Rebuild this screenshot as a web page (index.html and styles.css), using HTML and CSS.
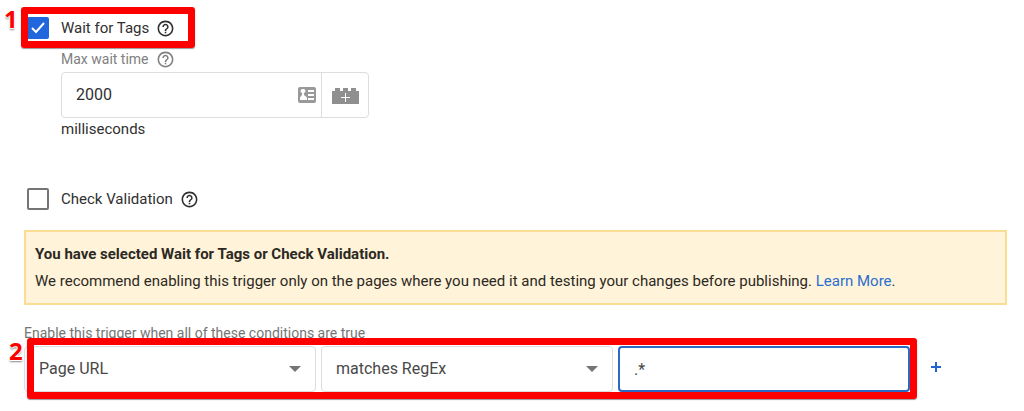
FILE: index.html
```html
<!DOCTYPE html>
<html lang="en">
<head>
<meta charset="utf-8">
<meta name="viewport" content="width=device-width, initial-scale=1">
<title>Trigger configuration</title>
<link rel="stylesheet" href="styles.css">
</head>
<body>
<svg class="symbols" aria-hidden="true">
  <symbol id="help" viewBox="0 0 24 24"><path fill="currentColor" d="M11 18h2v-2h-2v2zm1-16C6.480 2 2 6.480 2 12s4.480 10 10 10 10-4.480 10-10S17.520 2 12 2zm0 18c-4.410 0-8-3.590-8-8s3.590-8 8-8 8 3.590 8 8-3.590 8-8 8zm0-14c-2.210 0-4 1.790-4 4h2c0-1.100.9-2 2-2s2 .9 2 2c0 2-3 1.750-3 5h2c0-2.250 3-2.500 3-5 0-2.210-1.790-4-4-4z"/></symbol>
  <symbol id="arrow" viewBox="0 0 12 6"><path fill="#757575" d="M0 0h12L6 6z"/></symbol>
</svg>
<main class="page">
  <div class="option marked">
    <input class="checkbox" type="checkbox" id="wait" checked>
    <label for="wait">Wait for Tags</label>
    <svg class="help" role="img" aria-label="Help"><use href="#help"/></svg>
    <div class="highlight highlight-option"><span class="step step-option">1</span></div>
  </div>

  <div class="wait-field">
    <div class="field-label">
      <label for="max">Max wait time</label>
      <svg class="help" role="img" aria-label="Help"><use href="#help"/></svg>
    </div>
    <div class="input-group">
      <input class="wait-input" type="text" id="max" value="2000">
      <svg class="card-icon" viewBox="0 0 18 16" aria-hidden="true">
        <rect width="18" height="16" rx="2" fill="#999"/>
        <path fill="#fff" d="M10 3h6v2h-6zM10 7h6v2h-6zM10 11h6v2h-6zM5 2a2 2 0 0 1 1 4v2c1 1 3 2 3 3v2H2v-2c0-1 1-2 2-3V6a2 2 0 0 1 1-4z"/>
      </svg>
      <button class="variable" type="button" aria-label="Insert variable">
        <svg class="brick-icon" viewBox="0 0 27 17" aria-hidden="true">
          <path fill="#8f8f8f" d="M0 4h3V1h5v3h3V1h5v3h3V1h5v3h3v13H0z"/>
          <path fill="#fff" d="M13 6h1v4h4v1h-4v4h-1v-4H9v-1h4z"/>
        </svg>
      </button>
    </div>
    <div class="unit">milliseconds</div>
  </div>

  <div class="option">
    <input class="checkbox" type="checkbox" id="check">
    <label for="check">Check Validation</label>
    <svg class="help" role="img" aria-label="Help"><use href="#help"/></svg>
  </div>

  <section class="notice">
    <strong>You have selected Wait for Tags or Check Validation.</strong>
    <p>We recommend enabling this trigger only on the pages where you need it and testing your changes before publishing. <a href="#learn">Learn More</a>.</p>
  </section>

  <h2 class="caption">Enable this trigger when all of these conditions are true</h2>
  <div class="condition-row">
    <div class="conditions marked">
      <div class="select-box">
        <select aria-label="Variable"><option>Page URL</option></select>
        <svg class="arrow" aria-hidden="true"><use href="#arrow"/></svg>
      </div>
      <div class="select-box">
        <select aria-label="Operator"><option>matches RegEx</option></select>
        <svg class="arrow" aria-hidden="true"><use href="#arrow"/></svg>
      </div>
      <input class="value-input" type="text" aria-label="Value" value=".*">
      <div class="highlight highlight-conditions"><span class="step step-conditions">2</span></div>
    </div>
    <button class="add" type="button" aria-label="Add condition">
      <svg viewBox="0 0 10 10" aria-hidden="true"><path fill="#2064cf" d="M4 0h2v4h4v2H6v4H4V6H0V4h4z"/></svg>
    </button>
  </div>
</main>
</body>
</html>
```
FILE: styles.css
```css
* { box-sizing: border-box; }
body {
  margin: 0;
  background: #fff;
  color: #303030;
  font: 15px/20px Roboto, "Liberation Sans", sans-serif;
}
.symbols { display: none; }
.page { padding: 14px 17px 16px 24px; }
.option {
  display: flex;
  align-items: center;
  width: fit-content;
  height: 28px;
  padding-left: 3px;
}
.marked { position: relative; }
.checkbox {
  appearance: none;
  width: 22px;
  height: 22px;
  margin: 0 12px 0 0;
  border: 2px solid #757575;
  border-radius: 2px;
  background: #fff;
}
.checkbox:checked {
  border-color: #2166dc;
  background: #2166dc url("data:image/svg+xml,%3Csvg xmlns='http://www.w3.org/2000/svg' viewBox='0 0 18 18'%3E%3Cpath d='M3 9l4 4 8-9' fill='none' stroke='white' stroke-width='2'/%3E%3C/svg%3E") center / 18px 18px;
}
.help {
  width: 19px;
  height: 19px;
  margin-left: 7px;
  flex: none;
}
.highlight {
  position: absolute;
  border: 7px solid #f00;
  border-radius: 3px;
  box-shadow: 0 1px 1px #999;
  pointer-events: none;
}
.highlight-option { inset: -7px -20px -6px -3px; }
.highlight-conditions { inset: -8px -7px -7px 3px; }
.step {
  position: absolute;
  color: #f00;
  font: bold 24px/24px "Open Sans", sans-serif;
  text-shadow: -1px 0 #fff, 1px 0 #fff, 0 -1px #fff, 0 1px #fff, 0 2px 2px #888;
}
.step-option { top: -7px; left: -24px; }
.step-conditions { top: -6px; left: -25px; }
.wait-field {
  width: 345px;
  max-width: 100%;
  margin-top: 7px;
  padding-left: 37px;
}
.field-label {
  display: flex;
  align-items: center;
  height: 20px;
  color: #808080;
  font-size: 14px;
}
.input-group {
  display: flex;
  align-items: center;
  height: 46px;
  margin-top: 3px;
  border: 1px solid #ddd;
  border-radius: 4px;
}
.wait-input {
  flex: 1;
  min-width: 0;
  padding: 0 14px;
  border: 0;
  outline: 0;
  background: transparent;
  color: #303030;
  font: 16px/20px Roboto, sans-serif;
}
.card-icon {
  width: 18px;
  height: 16px;
  margin-right: 5px;
}
.variable {
  display: flex;
  align-items: center;
  justify-content: center;
  align-self: stretch;
  width: 47px;
  padding: 0;
  border: 0;
  border-left: 1px solid #ddd;
  background: transparent;
}
.brick-icon { width: 27px; height: 17px; }
.unit { margin: 1px 0 46px; }
.notice {
  margin-top: 17px;
  padding: 12px 9px;
  border: 2px solid #f9dd93;
  background: #fff3d9;
  color: #2c2923;
}
.notice strong { display: block; }
.notice p { margin: 7px 0 0; }
.notice a { color: #2a6fcf; text-decoration: none; }
.caption {
  margin: 18px 0 3px;
  color: #757575;
  font-size: 14px;
  font-weight: 400;
  line-height: 20px;
}
.condition-row {
  display: flex;
  align-items: center;
}
.conditions {
  display: grid;
  grid-template-columns: repeat(3, minmax(0, 1fr));
  gap: 5px;
  flex: 1;
}
.select-box { position: relative; }
.select-box select,
.value-input {
  width: 100%;
  height: 46px;
  padding: 0 14px;
  border: 1px solid #ddd;
  border-radius: 4px;
  outline: 0;
  background: #fff;
  color: #484848;
  font: 16px/20px Roboto, sans-serif;
}
.select-box select { appearance: none; }
.value-input { border: 2px solid #2a69c4; }
.arrow {
  position: absolute;
  top: 20px;
  right: 15px;
  width: 12px;
  height: 6px;
  pointer-events: none;
}
.add {
  width: 24px;
  height: 24px;
  margin: 0 59px 4px 14px;
  padding: 7px;
  border: 0;
  background: transparent;
}
.add svg { display: block; width: 10px; height: 10px; }
```
